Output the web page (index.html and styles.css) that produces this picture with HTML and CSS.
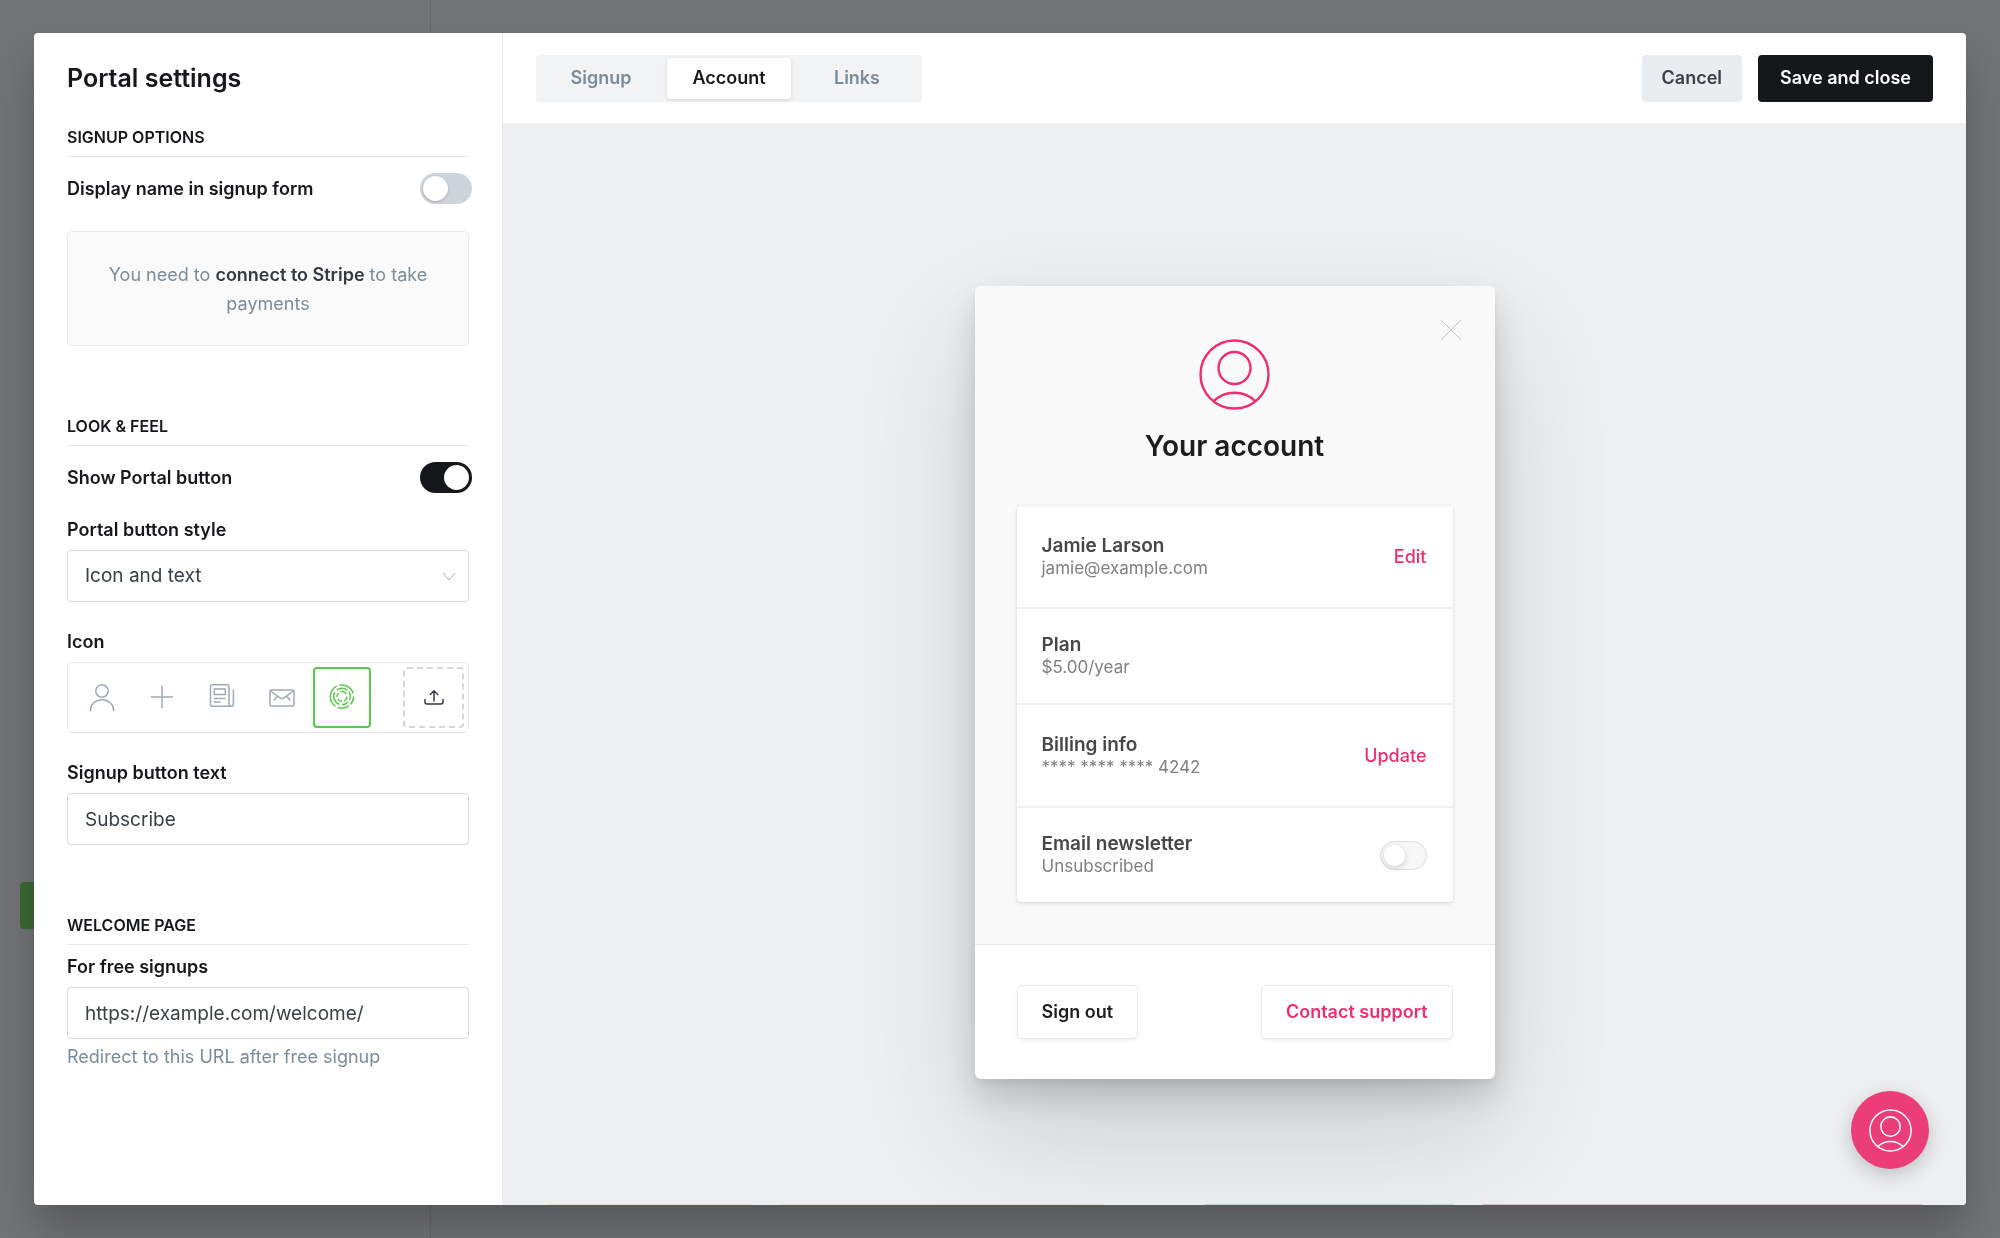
FILE: index.html
```html
<!DOCTYPE html>
<html lang="en">
<head>
<meta charset="utf-8">
<meta name="viewport" content="width=device-width, initial-scale=1">
<title>Portal settings</title>
<link rel="stylesheet" href="styles.css">
</head>
<body>
<svg class="sprite" aria-hidden="true">
  <symbol id="user-circle" viewBox="0 0 71 71">
    <circle cx="35.5" cy="35.5" r="34"/>
    <circle cx="35.5" cy="29" r="16"/>
    <path d="M14.3 62.5A30 30 0 0 1 56.7 62.5"/>
  </symbol>
</svg>

<div class="app" aria-hidden="true">
  <div class="app-nav"><div class="app-nav-button"></div></div>
</div>

<div class="backdrop">
  <div class="modal" role="dialog" aria-labelledby="modal-title">
    <aside class="sidebar">
      <h1 class="title" id="modal-title">Portal settings</h1>

      <section class="group">
        <h2 class="group-title">Signup options</h2>
        <div class="switch-row">
          <label for="display-name">Display name in signup form</label>
          <input class="switch" type="checkbox" role="switch" id="display-name">
        </div>
        <p class="notice">You need to <a href="#stripe">connect to Stripe</a> to take payments</p>
      </section>

      <section class="group">
        <h2 class="group-title">Look &amp; feel</h2>
        <div class="switch-row">
          <label for="show-button">Show Portal button</label>
          <input class="switch" type="checkbox" role="switch" id="show-button" checked>
        </div>
        <div class="field field-first">
          <label for="button-style">Portal button style</label>
          <div class="select">
            <select class="control" id="button-style">
              <option>Icon and text</option>
              <option>Icon only</option>
              <option>Text only</option>
            </select>
            <svg class="chevron" viewBox="0 0 14 9" aria-hidden="true"><path d="M1 1l6 7 6-7"/></svg>
          </div>
        </div>
        <fieldset class="field">
          <legend>Icon</legend>
          <div class="icon-picker">
            <label class="icon-option">
              <input type="radio" name="icon" aria-label="Person">
              <svg viewBox="0 0 28 28"><circle cx="14" cy="7" r="6.2"/><path d="M2.5 27.3v-1.5a11.5 10 0 0 1 23 0v1.5"/></svg>
            </label>
            <label class="icon-option">
              <input type="radio" name="icon" aria-label="Plus">
              <svg viewBox="0 0 28 28"><path d="M14 2v22M3 13h22"/></svg>
            </label>
            <label class="icon-option">
              <input type="radio" name="icon" aria-label="News">
              <svg viewBox="0 0 28 28"><path d="M21 5v15a2.2 2.2 0 0 0 4.400 0V5.500M23.200 22.200H4.500a2 2 0 0 1-2-2V2.700a2 2 0 0 1 2-2h14.500a2 2 0 0 1 2 2v4"/><path d="M6.300 5h11v5.500h-11zM6 14.500h11.500M6 18h6.500"/></svg>
            </label>
            <label class="icon-option">
              <input type="radio" name="icon" aria-label="Mail">
              <svg viewBox="0 0 28 28"><rect x="2" y="6" width="24" height="16" rx="1"/><path d="M2.500 7l9.500 6.800q2 1.300 4 0L25.500 7M9.300 12l-3.300 4.500M18.700 12l3.300 4.500"/></svg>
            </label>
            <label class="icon-option">
              <input type="radio" name="icon" aria-label="Rings" checked>
              <svg viewBox="0 0 28 28"><g transform="translate(14 12.5)"><path d="M-2.500-11.300A11.600 11.600 0 0 1 11.200-3M11.600 0A11.600 11.600 0 0 1 8.500 7.900M6.800 9.400A11.600 11.600 0 0 1-4.300 10.800M-6.500 9.600A11.600 11.600 0 0 1-5.200-10.400"/><path d="M-5.300-6.300A8.200 8.200 0 0 1 5.300-6.300M6.900-4.500A8.200 8.200 0 0 1 7.400 3.500M6 5.600A8.200 8.200 0 0 1 0 8.200M-2.600 7.800A8.200 8.200 0 0 1-7.100-4.200"/><path d="M-1.500-4.600A4.900 4.900 0 0 1 4.300-2.400M4.900 0A4.900 4.900 0 0 1 2 4.500M0 4.900A4.900 4.900 0 0 1-4.300 2.400M-4.900 .5A4.900 4.900 0 0 1-3.500-3.500"/></g></svg>
            </label>
            <button class="icon-upload" type="button" aria-label="Upload icon">
              <svg viewBox="0 0 28 28"><path d="M14 17V7M10.300 10.500L14 6.800l3.700 3.700M5 15.500V18a2 2 0 0 0 2 2h14a2 2 0 0 0 2-2v-2.500"/></svg>
            </button>
          </div>
        </fieldset>
        <div class="field">
          <label for="signup-text">Signup button text</label>
          <input class="control" type="text" id="signup-text" value="Subscribe">
        </div>
      </section>

      <section class="group">
        <h2 class="group-title">Welcome page</h2>
        <div class="field field-tight">
          <label for="welcome-url">For free signups</label>
          <input class="control" type="text" id="welcome-url" value="https://example.com/welcome/">
          <p class="hint">Redirect to this URL after free signup</p>
        </div>
      </section>
    </aside>

    <main class="main">
      <header class="toolbar">
        <div class="tabs" role="tablist">
          <button class="tab" type="button" role="tab">Signup</button>
          <button class="tab tab-active" type="button" role="tab" aria-selected="true">Account</button>
          <button class="tab" type="button" role="tab">Links</button>
        </div>
        <div class="actions">
          <button class="button" type="button">Cancel</button>
          <button class="button button-dark" type="button">Save and close</button>
        </div>
      </header>

      <div class="preview">
        <div class="popup">
          <button class="popup-close" type="button" aria-label="Close">
            <svg viewBox="0 0 22 22"><path d="M1 1l20 20M21 1L1 21"/></svg>
          </button>
          <div class="popup-body">
            <svg class="avatar" aria-hidden="true"><use href="#user-circle"/></svg>
            <h2 class="popup-title">Your account</h2>
            <div class="card">
              <div class="row">
                <div><h3>Jamie Larson</h3><p>jamie@example.com</p></div>
                <button class="row-action" type="button">Edit</button>
              </div>
              <div class="row">
                <div><h3>Plan</h3><p>$5.00/year</p></div>
              </div>
              <div class="row">
                <div><h3>Billing info</h3><p>**** **** **** 4242</p></div>
                <button class="row-action" type="button">Update</button>
              </div>
              <div class="row">
                <div><h3><label for="newsletter">Email newsletter</label></h3><p>Unsubscribed</p></div>
                <input class="switch switch-light" type="checkbox" role="switch" id="newsletter">
              </div>
            </div>
          </div>
          <footer class="popup-footer">
            <button class="popup-button" type="button">Sign out</button>
            <a class="popup-button popup-button-pink" href="#support">Contact support</a>
          </footer>
        </div>
        <button class="launcher" type="button" aria-label="Open account">
          <svg aria-hidden="true"><use href="#user-circle"/></svg>
        </button>
      </div>
    </main>
  </div>
</div>
</body>
</html>
```
FILE: styles.css
```css
:root {
  --ink: #15171a;
  --text: #394047;
  --muted: #7c8b9a;
  --line: #e5e9ed;
  --pink: #ee2e70;
  --green: #5ac94b;
}

*, *::before, *::after { box-sizing: border-box; }

body {
  margin: 0;
  background: #737476;
  color: var(--ink);
  font-family: Inter, "Liberation Sans", sans-serif;
  font-size: 18px;
  line-height: 24px;
}

h1, h2, h3, p, fieldset, legend { margin: 0; padding: 0; border: 0; }
button, input, select { margin: 0; font: inherit; color: inherit; }
button { padding: 0; border: 0; background: none; cursor: pointer; }
a { text-decoration: none; }
svg { display: block; fill: none; stroke: currentColor; }
.sprite { position: absolute; width: 0; height: 0; }

/* Screen behind the dialog */
.app { position: fixed; inset: 0; display: flex; }
.app-nav {
  display: flex;
  flex-direction: column;
  justify-content: flex-end;
  width: 431px;
  padding: 0 20px 309px;
  border-right: 1px solid #69696b;
}
.app-nav-button { height: 47px; border-radius: 4px; background: #3a6b34; }

/* Dialog */
.backdrop { position: relative; display: flex; min-height: 100vh; padding: 33px 34px; }
.modal {
  display: grid;
  grid-template-columns: 469px 1fr;
  flex: 1;
  border-radius: 4px;
  background: #fff;
  box-shadow: 0 0 1px rgba(0, 0, 0, .2), 0 26px 44px rgba(0, 0, 0, .24);
  overflow: hidden;
}

/* Sidebar */
.sidebar { padding: 29px 33px; border-right: 1px solid var(--line); }
.title { font-size: 25px; font-weight: 600; line-height: 32px; }
.title + .group { margin-top: 33px; }
.group + .group { margin-top: 70px; }
.group-title {
  padding-bottom: 9px;
  border-bottom: 1px solid var(--line);
  font-size: 16px;
  font-weight: 600;
  line-height: 20px;
  text-transform: uppercase;
}
.sidebar label, .sidebar legend { font-weight: 600; }

.switch-row {
  display: flex;
  align-items: center;
  justify-content: space-between;
  margin-right: -3px;
  padding-top: 16px;
}
.switch {
  appearance: none;
  display: flex;
  flex: none;
  width: 52px;
  height: 31px;
  padding: 3px;
  border-radius: 16px;
  background: #ced4d9;
  cursor: pointer;
}
.switch::before {
  content: "";
  width: 25px;
  height: 25px;
  border-radius: 50%;
  background: #fff;
  box-shadow: 0 1px 3px rgba(0, 0, 0, .2);
}
.switch:checked { justify-content: flex-end; background: var(--ink); }

.notice {
  margin-top: 27px;
  padding: 28px 40px 27px;
  border: 1px solid var(--line);
  border-radius: 4px;
  background: #fafafa;
  color: var(--muted);
  line-height: 29px;
  text-align: center;
}
.notice a { color: #343a41; font-weight: 600; }

.field { display: flex; flex-direction: column; gap: 8px; margin-top: 28px; }
.field-first { margin-top: 25px; }
.field-tight { margin-top: 10px; }
.control {
  appearance: none;
  width: 100%;
  height: 52px;
  padding: 0 17px;
  border: 1px solid #d5d9dc;
  border-radius: 4px;
  background: #fff;
  color: var(--text);
  font-size: 19px;
}
.select { display: grid; align-items: center; }
.select > * { grid-area: 1 / 1; }
.chevron { justify-self: end; width: 14px; height: 9px; margin-right: 13px; color: #a3aeb9; pointer-events: none; }
.hint { margin-top: -2px; color: var(--muted); }

fieldset.field { display: block; min-width: 0; }
.field legend { margin-bottom: 8px; }
.icon-picker {
  display: flex;
  padding: 4px;
  border: 1px solid var(--line);
  border-radius: 5px;
}
.icon-option, .icon-upload {
  display: grid;
  place-items: center;
  height: 61px;
  border-radius: 4px;
  cursor: pointer;
}
.icon-option { width: 58px; margin: 0 1px; color: #a0a9b5; }
.icon-option input { position: absolute; opacity: 0; pointer-events: none; }
.icon-option svg, .icon-upload svg { width: 28px; height: 28px; stroke-width: 1.5; stroke-linejoin: round; }
.icon-option:has(:checked) { border: 2px solid var(--green); color: var(--green); }
.icon-upload { width: 61px; margin-left: auto; border: 2px dashed #d3d7db; }
.icon-upload svg { color: #343a41; stroke-linecap: round; }

/* Main column */
.main { display: flex; flex-direction: column; min-width: 0; }
.toolbar {
  display: flex;
  align-items: center;
  justify-content: space-between;
  height: 90px;
  padding: 0 33px;
}
.tabs {
  display: grid;
  grid-template-columns: repeat(3, 124px);
  gap: 4px;
  padding: 3px;
  border-radius: 4px;
  background: #f1f3f4;
}
.tab { height: 41px; border-radius: 3px; color: var(--muted); font-weight: 600; }
.tab-active { background: #fff; color: var(--ink); box-shadow: 0 1px 4px rgba(0, 0, 0, .12); }
.actions { display: flex; gap: 16px; }
.button {
  height: 47px;
  padding: 0 20px;
  border-radius: 4px;
  background: #e9edf0;
  color: var(--text);
  font-weight: 600;
}
.button-dark { padding: 0 22px; background: var(--ink); color: #fff; }

.preview {
  position: relative;
  display: flex;
  align-items: center;
  justify-content: center;
  flex: 1;
  padding-top: 37px;
  /* Thin strip of post colours along the bottom edge */
  background:
    linear-gradient(90deg,
      transparent 3%, #e2e4bd 3% 17%, transparent 17% 19%,
      #e2e4bd 19% 41%, transparent 41% 48%,
      #bfe0d9 48% 65%, transparent 65% 67%,
      #e6bcc9 67% 97%, transparent 97%) bottom / 100% 1px no-repeat,
    #edeff1;
}

/* Account popup */
.popup {
  position: relative;
  width: 520px;
  border-radius: 6px;
  background: #fff;
  box-shadow: 0 4px 6px rgba(0, 0, 0, .06), 0 18px 32px rgba(0, 0, 0, .14), 0 54px 120px rgba(0, 0, 0, .14);
}
.popup-close { position: absolute; top: 33px; right: 33px; color: #c3c3c3; }
.popup-close svg { width: 22px; height: 22px; }
.popup-body {
  display: flex;
  flex-direction: column;
  align-items: center;
  padding: 53px 42px 42px;
  border-radius: 6px 6px 0 0;
  background: #f9f9f9;
}
.avatar { width: 71px; height: 71px; color: var(--pink); stroke-width: 2.4; }
.popup-title { margin-top: 18px; color: #1d1d1d; font-size: 28px; font-weight: 600; line-height: 36px; }
.card {
  width: 100%;
  margin-top: 42px;
  border-radius: 4px;
  background: #fff;
  box-shadow: 0 0 2px rgba(0, 0, 0, .1), 0 2px 4px rgba(0, 0, 0, .1);
}
.row {
  display: flex;
  align-items: center;
  justify-content: space-between;
  padding: 24px 26px 24px 25px;
}
.row + .row { border-top: 2px solid #efefef; }
.row h3 { color: #474747; font-size: 19px; font-weight: 600; line-height: 23px; }
.row p { color: #7f7f7f; font-size: 17px; line-height: 23px; }
.row-action { height: 53px; color: var(--pink); font-weight: 500; }
.switch-light {
  width: 47px;
  height: 29px;
  border: 1px solid #dcdcdc;
  background: #f7f7f7;
}
.switch-light::before { width: 21px; height: 21px; box-shadow: 0 2px 6px rgba(0, 0, 0, .16); }

.popup-footer {
  display: flex;
  align-items: center;
  justify-content: space-between;
  padding: 40px 42px;
  border-top: 1px solid #e7e7e7;
}
.popup-button {
  display: flex;
  align-items: center;
  height: 54px;
  padding: 0 24px;
  border: 1px solid #ebebeb;
  border-radius: 5px;
  background: #fff;
  color: #1d1d1d;
  font-weight: 600;
  box-shadow: 0 2px 4px rgba(0, 0, 0, .06);
}
.popup-button-pink { color: var(--pink); }

.launcher {
  position: absolute;
  right: 37px;
  bottom: 36px;
  display: grid;
  place-items: center;
  width: 78px;
  height: 78px;
  border-radius: 50%;
  background: #eb3d78;
  color: #fff;
  box-shadow: 0 6px 20px rgba(0, 0, 0, .2);
}
.launcher svg { width: 43px; height: 43px; stroke-width: 2.5; }
```
